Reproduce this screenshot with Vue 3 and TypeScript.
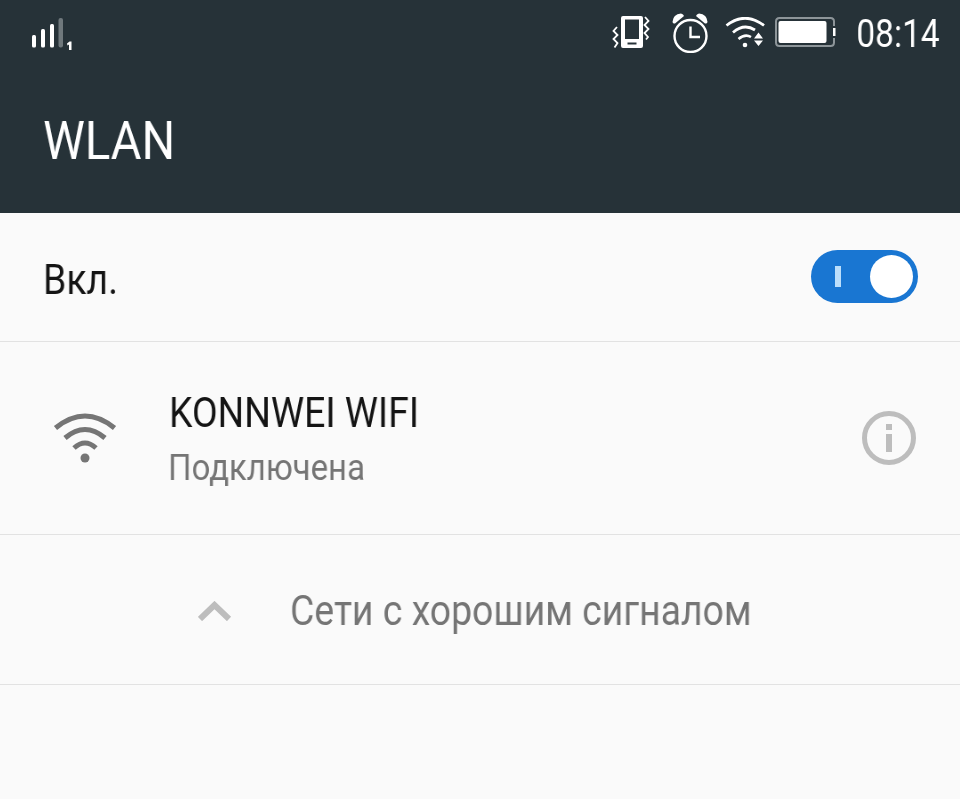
<script setup lang="ts">
const title = 'WLAN'
const ssid = 'KONNWEI WIFI'
</script>

<template>
  <div class="page">
    <header class="head">
      <div class="status">
        <svg class="signal" width="42" height="34" viewBox="0 0 42 34">
          <rect x="0" y="17" width="4" height="12.500" rx="1.500" fill="#fff" />
          <rect x="9" y="11" width="4" height="18.500" rx="1.500" fill="#fff" />
          <rect x="18" y="6" width="4" height="23.500" rx="1.500" fill="#fff" />
          <rect x="26.500" y="0" width="4.500" height="29.500" rx="2" fill="#6f787c" />
          <path d="M35 25.500 L37.500 23.500 H39.500 V32 H37 V26.500 L35.500 27.500 Z" fill="#fff" />
        </svg>
        <div class="status-right">
          <svg class="ic-vib" width="38" height="34" viewBox="0 0 38 34">
            <path d="M11 0 H29 Q31 0 31 2 V30 Q31 32 29 32 H11 Q9 32 9 30 V2 Q9 0 11 0 Z M13 3.500 V23 H27 V3.500 Z M15.500 26.500 V28.500 H24.500 V26.500 Z" fill="#fff" fill-rule="evenodd" />
            <path d="M5 11 L1.500 15 L5.500 19 L1.500 23 L5.500 27 L2.500 31.500" fill="none" stroke="#fff" stroke-width="1.800" />
            <path d="M33 1 L36.500 5 L32.500 9 L36.500 13 L32.500 17 L36 21 L34 23.500" fill="none" stroke="#fff" stroke-width="1.800" />
          </svg>
          <svg class="ic-alarm" width="36" height="40" viewBox="0 0 36 40">
            <circle cx="18.500" cy="23" r="16" fill="none" stroke="#fff" stroke-width="2.400" />
            <path d="M18.500 13.500 V24 H28" fill="none" stroke="#fff" stroke-width="2.400" />
            <path d="M0.500 9 Q1 1 9 0.500 Q11.500 1 12 3 L3 10.500 Q1 11 0.500 9 Z" fill="#fff" />
            <path d="M35.500 9 Q35 1 27 0.500 Q24.500 1 24 3 L33 10.500 Q35 11 35.500 9 Z" fill="#fff" />
          </svg>
          <svg class="ic-wifi" width="42" height="34" viewBox="0 0 42 34">
            <path d="M1.500 8.500 Q20 -6 39 8.500" fill="none" stroke="#fff" stroke-width="2.800" />
            <path d="M8 15.500 Q19 6 30 13" fill="none" stroke="#fff" stroke-width="2.800" />
            <path d="M13.500 22 Q20 16.500 26 20" fill="none" stroke="#fff" stroke-width="2.600" />
            <circle cx="20" cy="28" r="2.300" fill="#fff" />
            <path d="M33.500 15.500 L38 21.500 H29 Z M29 23.500 H38 L33.500 29 Z" fill="#fff" />
          </svg>
          <svg class="ic-batt" width="62" height="30" viewBox="0 0 62 30">
            <path d="M59 9 V4.500 Q59 1 55.500 1 H4.500 Q1 1 1 4.500 V25.500 Q1 29 4.500 29 H55.500 Q59 29 59 25.500 V21" fill="none" stroke="#8d9599" stroke-width="2" />
            <rect x="3.500" y="4" width="48" height="22" rx="2" fill="#fff" />
            <rect x="58" y="11" width="2.500" height="8" fill="#fff" />
          </svg>
          <span class="clock">08:14</span>
        </div>
      </div>
      <div class="title"><span class="narrow">{{ title }}</span></div>
    </header>

    <section class="row row-toggle">
      <span class="label narrow">Вкл.</span>
      <div class="toggle">
        <i class="tick"></i>
        <i class="knob"></i>
      </div>
    </section>

    <section class="row row-net">
      <svg class="net-wifi" width="64" height="54" viewBox="0 0 64 54">
        <path d="M2.500 17 Q32 -7 61.500 17" fill="none" stroke="#757575" stroke-width="5" />
        <path d="M12 27 Q32 10 52 27" fill="none" stroke="#757575" stroke-width="5" />
        <path d="M21 37 Q32 27 43 37" fill="none" stroke="#757575" stroke-width="5" />
        <circle cx="32" cy="47" r="4.500" fill="#757575" />
      </svg>
      <div class="net-text">
        <div class="ssid"><span class="narrow">{{ ssid }}</span></div>
        <div class="state"><span class="narrow">Подключена</span></div>
      </div>
      <svg class="info" width="54" height="54" viewBox="0 0 54 54">
        <circle cx="27" cy="27" r="24.500" fill="none" stroke="#bdbdbd" stroke-width="5" />
        <rect x="24" y="13" width="6" height="6" fill="#bdbdbd" />
        <rect x="24" y="23" width="6" height="18" fill="#bdbdbd" />
      </svg>
    </section>

    <section class="row row-more">
      <svg class="chev" width="34" height="20" viewBox="0 0 34 20">
        <path d="M2 18 L16.500 4 L31 18" fill="none" stroke="#bdbdbd" stroke-width="6" />
      </svg>
      <span class="more narrow">Сети с хорошим сигналом</span>
    </section>
  </div>
</template>

<style>
html, body { margin: 0; background: #fafafa; }
</style>

<style scoped>
.page {
  width: 960px;
  height: 799px;
  overflow: hidden;
  background: #fafafa;
  font-family: Roboto, "Liberation Sans", sans-serif;
}
.narrow {
  display: inline-block;
  transform: scaleX(.89);
  transform-origin: left center;
  white-space: nowrap;
  will-change: transform;
}
.head {
  height: 213px;
  box-sizing: border-box;
  background: #263238;
  color: #fff;
  padding-top: 13px;
}
.status {
  display: flex;
  justify-content: space-between;
  align-items: flex-start;
  padding: 0 20px 0 32px;
}
.signal { margin-top: 5px; }
.status-right { display: flex; align-items: flex-start; }
.ic-vib { margin-top: 3px; }
.ic-alarm { margin-left: 22px; margin-top: 0; }
.ic-wifi { margin-left: 17px; margin-top: 4px; }
.ic-batt { margin-left: 8px; margin-top: 4px; }
.clock {
  margin-left: 8px;
  font-size: 38px;
  line-height: 42px;
  display: inline-block;
  transform: scaleX(.88);
  transform-origin: right center;
  will-change: transform;
}
.title { margin: 56px 0 0 43px; font-size: 53px; line-height: 60px; }
.row {
  display: flex;
  align-items: center;
  border-bottom: 1px solid #e2e2e2;
}
.row-toggle {
  height: 128px;
  justify-content: space-between;
  padding: 0 42px 0 43px;
}
.label { font-size: 42px; color: #141414; margin-top: 4px; }
.toggle {
  width: 107px;
  height: 53px;
  margin-bottom: 2px;
  border-radius: 27px;
  background: #1976d2;
  display: flex;
  align-items: center;
  justify-content: space-between;
  box-sizing: border-box;
  padding: 0 5px 0 24px;
}
.tick { width: 6px; height: 21px; background: #bbdefb; }
.knob { width: 43px; height: 43px; border-radius: 50%; background: #fff; }
.row-net {
  height: 192px;
  padding: 0 44px 0 53px;
}
.net-wifi { margin-bottom: 1px; }
.net-text { flex: 1; margin-left: 52px; padding-top: 3px; }
.ssid { font-size: 42px; line-height: 44px; color: #141414; }
.state { font-size: 37px; line-height: 40px; margin-top: 13px; margin-left: -1px; color: #757575; }
.row-more {
  height: 149px;
  padding-left: 198px;
}
.chev { margin-top: 2px; }
.more { margin-left: 58px; margin-top: 2px; font-size: 42px; color: #757575; }
</style>
